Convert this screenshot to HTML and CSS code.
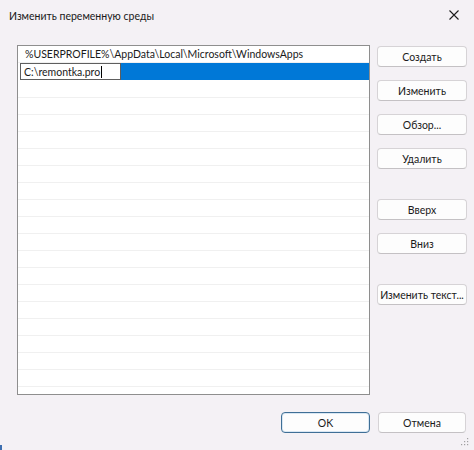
FILE: index.html
```html
<!DOCTYPE html>
<html lang="ru">
<head>
<meta charset="utf-8">
<title>Изменить переменную среды</title>
<link rel="stylesheet" href="styles.css">
</head>
<body>
<div class="dialog">
  <div class="titlebar">
    <span class="title">Изменить переменную среды</span>
    <svg class="close" width="10" height="10" viewBox="0 0 10 10"><path d="M0.5 0.5 L9.5 9.5 M9.5 0.5 L0.5 9.5" stroke="#1c1c1c" stroke-width="1.1" fill="none"/></svg>
  </div>
  <div class="content">
    <div class="list">
      <div class="row"><span class="cell">%USERPROFILE%\AppData\Local\Microsoft\WindowsApps</span></div>
      <div class="row row-sel">
        <div class="editor"><span>C:\remontka.pro</span><span class="caret"></span></div>
        <div class="selfill"></div>
      </div>
      <div class="row"></div><div class="row"></div><div class="row"></div><div class="row"></div>
      <div class="row"></div><div class="row"></div><div class="row"></div><div class="row"></div>
      <div class="row"></div><div class="row"></div><div class="row"></div><div class="row"></div>
      <div class="row"></div><div class="row"></div><div class="row"></div><div class="row"></div>
      <div class="row"></div><div class="row"></div><div class="row"></div>
    </div>
    <div class="side">
      <div class="group">
        <button class="btn">Создать</button>
        <button class="btn">Изменить</button>
        <button class="btn">Обзор...</button>
        <button class="btn">Удалить</button>
      </div>
      <div class="group">
        <button class="btn">Вверх</button>
        <button class="btn">Вниз</button>
      </div>
      <div class="group">
        <button class="btn">Изменить текст...</button>
      </div>
    </div>
  </div>
  <div class="footer">
    <button class="btn btn-ok">OK</button>
    <button class="btn btn-cancel">Отмена</button>
  </div>
  <svg class="grip" width="8" height="8" viewBox="0 0 8 8">
    <rect x="6" y="0" width="1.2" height="1.2" fill="#a0a0a0"/>
    <rect x="3" y="3" width="1.2" height="1.2" fill="#a0a0a0"/>
    <rect x="6" y="3" width="1.2" height="1.2" fill="#a0a0a0"/>
    <rect x="0" y="6" width="1.2" height="1.2" fill="#a0a0a0"/>
    <rect x="3" y="6" width="1.2" height="1.2" fill="#a0a0a0"/>
    <rect x="6" y="6" width="1.2" height="1.2" fill="#a0a0a0"/>
  </svg>
  <div class="corner"></div>
</div>
</body>
</html>
```

FILE: styles.css
```css
html, body {
  margin: 0;
  padding: 0;
}
body {
  background: #f4f1f5;
  font-family: Lato, "Noto Sans", sans-serif;
  font-size: 10.5px;
  color: #1a1a1a;
}
.dialog {
  position: relative;
  width: 474px;
  height: 450px;
  display: flex;
  flex-direction: column;
  overflow: hidden;
}
.titlebar {
  height: 30px;
  display: flex;
  align-items: center;
  justify-content: space-between;
  padding: 0 15px 0 9px;
}
.title {
  font-size: 10.5px;
  color: #1a1a1a;
  padding-top: 1px;
}
.close {
  display: block;
}
.content {
  display: flex;
  margin-top: 15px;
  padding-left: 17px;
  gap: 7px;
}
.list {
  width: 351px;
  height: 348px;
  border: 1px solid #8e8e8e;
  background: #ffffff;
  overflow: hidden;
}
.row {
  height: 16px;
  border-bottom: 1px solid #f0f0f0;
  display: flex;
  align-items: center;
  line-height: 16px;
}
.cell {
  padding-left: 7px;
  white-space: nowrap;
}
.row-sel {
  border-bottom-color: #ffffff;
  height: 17px;
}
.editor {
  margin-left: 2px;
  width: 96px;
  height: 15px;
  border: 1px solid #5e5e5e;
  background: #ffffff;
  display: flex;
  align-items: center;
  padding-left: 3px;
  white-space: nowrap;
}
.caret {
  display: inline-block;
  width: 1px;
  height: 12px;
  background: #000;
  margin-left: 1px;
}
.selfill {
  flex: 1;
  height: 17px;
  background: #0078d7;
}
.side {
  display: flex;
  flex-direction: column;
  gap: 30px;
  padding-top: 1px;
}
.group {
  display: flex;
  flex-direction: column;
  gap: 13px;
}
.btn {
  width: 90px;
  height: 21px;
  padding: 0;
  font-family: inherit;
  font-size: 10.5px;
  color: #1a1a1a;
  background: #fdfdfd;
  border: 1px solid #d6d3d6;
  border-bottom-color: #c4c1c4;
  border-radius: 4px;
  line-height: 18px;
  white-space: nowrap;
}
.footer {
  display: flex;
  justify-content: flex-end;
  gap: 8px;
  padding-right: 8px;
  margin-top: 17px;
}
.btn-ok {
  width: 89px;
  border: 1px solid #3f6f96;
  box-shadow: inset 0 0 0 1px #d9e7f3;
}
.btn-cancel {
  width: 88px;
}
.grip {
  position: absolute;
  right: 5px;
  bottom: 4px;
}
.corner {
  position: absolute;
  left: 0;
  bottom: 0;
  width: 2px;
  height: 5px;
  background: #3d6fb0;
}
```
